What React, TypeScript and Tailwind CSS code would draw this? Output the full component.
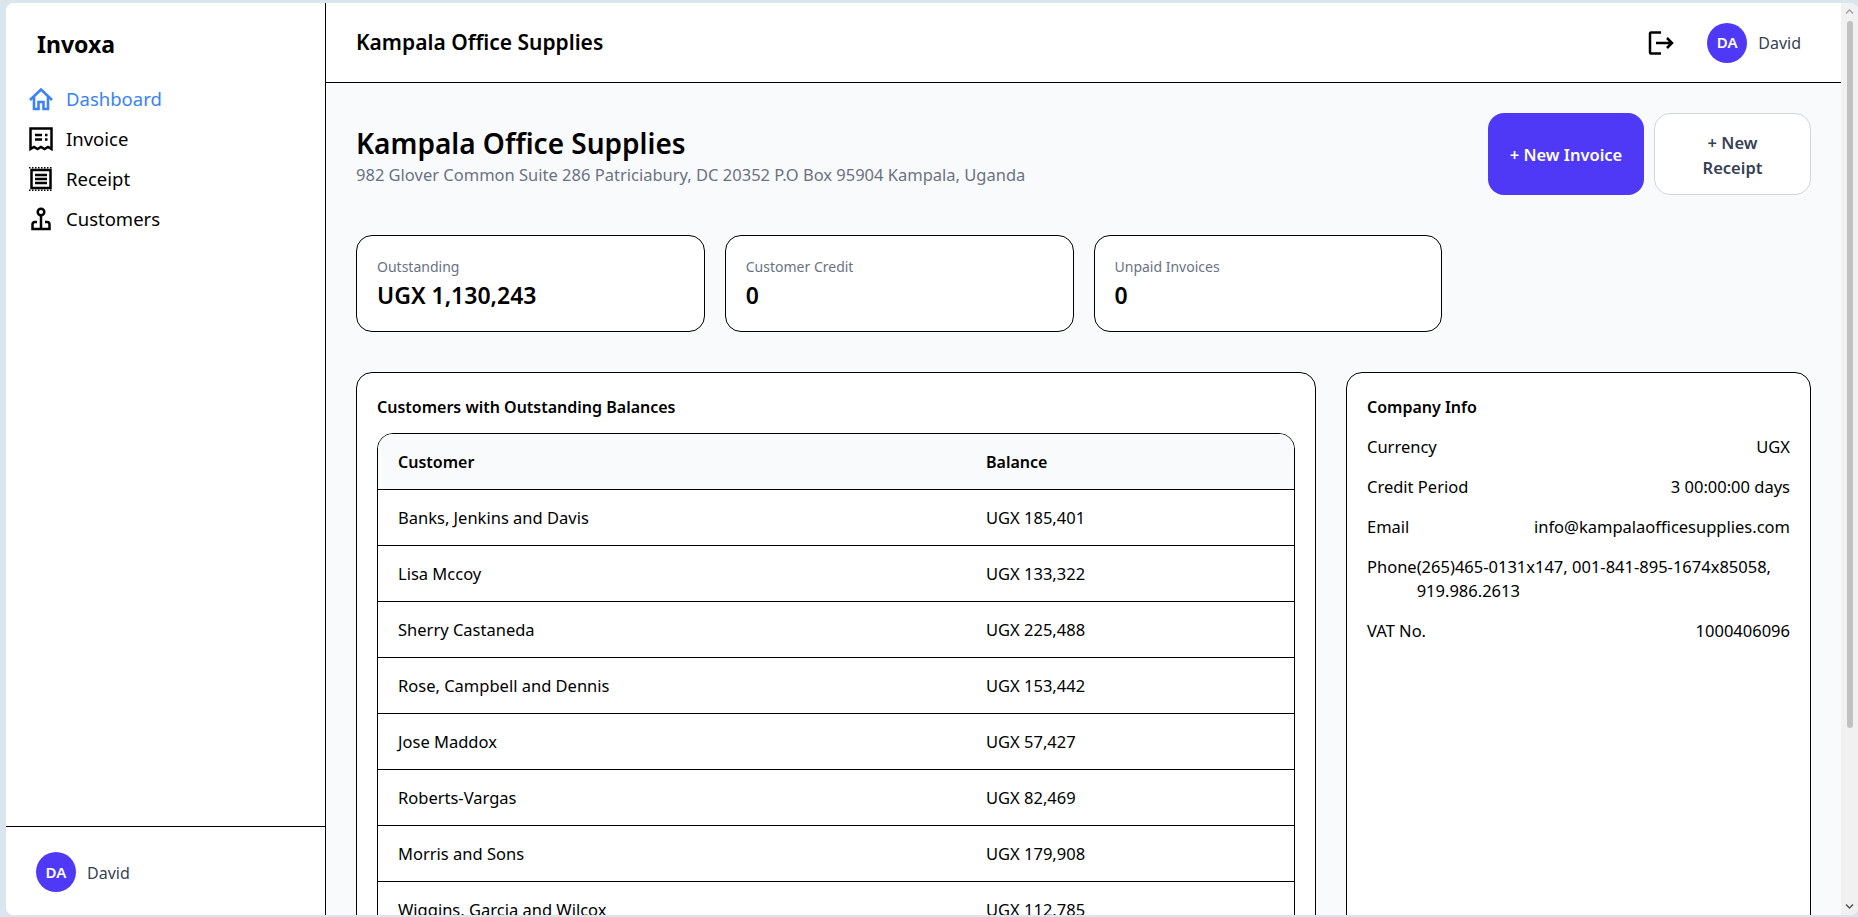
import React from "react";

const customers = [
  { name: "Banks, Jenkins and Davis", balance: "UGX 185,401" },
  { name: "Lisa Mccoy", balance: "UGX 133,322" },
  { name: "Sherry Castaneda", balance: "UGX 225,488" },
  { name: "Rose, Campbell and Dennis", balance: "UGX 153,442" },
  { name: "Jose Maddox", balance: "UGX 57,427" },
  { name: "Roberts-Vargas", balance: "UGX 82,469" },
  { name: "Morris and Sons", balance: "UGX 179,908" },
  { name: "Wiggins, Garcia and Wilcox", balance: "UGX 112,785" },
];

const HomeIcon = () => (
  <svg width="24" height="24" viewBox="0 0 24 24" fill="none" stroke="currentColor" strokeWidth="2.600">
    <path d="M1 13 12 2.500 23 13" />
    <path d="M5 10v12h4.500v-7h5v7H19V10" />
  </svg>
);

const InvoiceIcon = () => (
  <svg width="24" height="24" viewBox="0 0 24 24" fill="none" stroke="currentColor" strokeWidth="2.500">
    <path d="M1.500 22V1.500h21V22l-3.500-2-3.500 2-3.500-2-3.500 2-3.500-2z" />
    <path d="M6 8h7M6 12.500h7M16 8h2.500M16 12.500h2.500" />
  </svg>
);

const ReceiptIcon = () => (
  <svg width="24" height="24" viewBox="0 0 24 24" fill="none" stroke="currentColor" strokeWidth="2.500">
    <path d="M2.500 3h19v18h-19z" />
    <path d="M6 8h12M6 12h12M6 16h12" />
    <path d="M0 .8h24M0 23.200h24" strokeWidth="1.500" strokeDasharray="1.500 1.500" />
  </svg>
);

const CustomersIcon = () => (
  <svg width="24" height="24" viewBox="0 0 24 24" fill="none" stroke="currentColor" strokeWidth="2.500">
    <circle cx="12" cy="5" r="3.300" />
    <path d="M12 9v13" />
    <path d="M8 15H6a2.500 2.500 0 0 0-2.500 2.500V22h17v-4.500A2.500 2.500 0 0 0 18 15h-2" />
  </svg>
);

const LogoutIcon = () => (
  <svg width="26" height="24" viewBox="0 0 26 24" fill="none" stroke="currentColor" strokeWidth="2.500">
    <path d="M13 1.500H3a1 1 0 0 0-1 1v19a1 1 0 0 0 1 1h10" />
    <path d="M8 12h16M19 7l5 5-5 5" />
  </svg>
);

const Avatar = () => (
  <div className="flex h-10 w-10 items-center justify-center rounded-full bg-[#4f39f6] text-[15px] font-semibold text-white">DA</div>
);

const UserChip = () => (
  <div className="flex items-center gap-[11px]">
    <Avatar />
    <span className="mt-px text-base text-[#364153]">David</span>
  </div>
);

const NavItem: React.FC<{ icon: React.ReactNode; label: string; active?: boolean }> = ({ icon, label, active }) => (
  <div className={active ? "flex h-10 items-center gap-[13px] text-[#3b82f6]" : "flex h-10 items-center gap-[13px] text-black"}>
    {icon}
    <span className="text-[18.500px]">{label}</span>
  </div>
);

const StatCard: React.FC<{ label: string; value: string }> = ({ label, value }) => (
  <div className="h-[97px] rounded-2xl border border-black bg-white px-5 py-[21px]">
    <div className="text-sm leading-5 text-[#6a7282]">{label}</div>
    <div className="mt-[2px] text-[23px] leading-8 font-semibold text-black">{value}</div>
  </div>
);

const InfoRow: React.FC<{ label: string; value: string }> = ({ label, value }) => (
  <div className="flex justify-between text-[16.500px] leading-6">
    <span>{label}</span>
    <span>{value}</span>
  </div>
);

export default function App() {
  return (
    <div className="h-[917px] w-[1858px] overflow-hidden bg-[#dbe5ee] pt-[3px] pl-[6px] font-['Noto_Sans','Open_Sans',sans-serif] text-black">
      <div className="flex h-[912px] overflow-hidden rounded-lg bg-white">
        <aside className="flex w-[320px] shrink-0 flex-col border-r border-black bg-white">
          <div className="flex-1 pt-[25px]">
            <div className="pl-[31px] text-[23px] leading-8 font-bold">Invoxa</div>
            <nav className="mt-[19px] flex flex-col pl-[23px]">
              <NavItem icon={<HomeIcon />} label="Dashboard" active />
              <NavItem icon={<InvoiceIcon />} label="Invoice" />
              <NavItem icon={<ReceiptIcon />} label="Receipt" />
              <NavItem icon={<CustomersIcon />} label="Customers" />
            </nav>
          </div>
          <div className="flex h-[89px] items-start border-t border-black pt-[25px] pl-[30px]">
            <UserChip />
          </div>
        </aside>

        <div className="flex min-w-0 flex-1 flex-col">
          <header className="flex h-[80px] shrink-0 items-center justify-between border-b border-black bg-white pr-[40px] pl-[30px]">
            <div className="text-[21px] font-semibold">Kampala Office Supplies</div>
            <div className="flex items-center gap-[33px]">
              <LogoutIcon />
              <UserChip />
            </div>
          </header>

          <main className="min-h-0 flex-1 overflow-hidden bg-[#f9fafb] px-[30px] pt-[30px]">
            <div className="flex items-start justify-between">
              <div className="pt-[12px]">
                <h1 className="text-[28px] leading-9 font-semibold">Kampala Office Supplies</h1>
                <p className="mt-[2px] text-[16.500px] leading-6 text-[#6a7282]">982 Glover Common Suite 286 Patriciabury, DC 20352 P.O Box 95904 Kampala, Uganda</p>
              </div>
              <div className="flex gap-[10px]">
                <button className="h-[82px] w-[156px] rounded-2xl bg-[#4f39f6] pt-[3px] text-[16.500px] font-semibold text-white">+ New Invoice</button>
                <button className="h-[82px] w-[157px] rounded-2xl border border-[#d1d5dc] bg-white px-6 pt-px text-[16.500px] leading-[25px] font-semibold text-[#364153]">+ New Receipt</button>
              </div>
            </div>

            <div className="mt-[40px] grid grid-cols-4 gap-5">
              <StatCard label="Outstanding" value="UGX 1,130,243" />
              <StatCard label="Customer Credit" value="0" />
              <StatCard label="Unpaid Invoices" value="0" />
            </div>

            <div className="mt-[40px] grid grid-cols-[960px_465px] gap-[30px]">
              <section className="h-[600px] rounded-2xl border border-black bg-white px-5 pt-[22px]">
                <h2 className="text-base leading-6 font-semibold">Customers with Outstanding Balances</h2>
                <div className="mt-[14px] overflow-hidden rounded-2xl border border-black">
                  <div className="grid h-[56px] grid-cols-[588px_1fr] items-center border-b border-black bg-[#f9fafb] px-5 pt-px text-base font-semibold">
                    <div>Customer</div>
                    <div>Balance</div>
                  </div>
                  {customers.map((c) => (
                    <div key={c.name} className="grid h-[56px] grid-cols-[588px_1fr] items-center border-b border-black px-5 pt-[2px] text-[16.500px]">
                      <div>{c.name}</div>
                      <div>{c.balance}</div>
                    </div>
                  ))}
                </div>
              </section>

              <section className="h-[600px] rounded-2xl border border-black bg-white px-5 pt-[22px]">
                <h2 className="text-base leading-6 font-semibold">Company Info</h2>
                <div className="mt-4 flex flex-col gap-4">
                  <InfoRow label="Currency" value="UGX" />
                  <InfoRow label="Credit Period" value="3 00:00:00 days" />
                  <InfoRow label="Email" value="info@kampalaofficesupplies.com" />
                  <div className="flex text-[16.500px] leading-6">
                    <span>Phone</span>
                    <span>(265)465-0131x147, 001-841-895-1674x85058, 919.986.2613</span>
                  </div>
                  <InfoRow label="VAT No." value="1000406096" />
                </div>
              </section>
            </div>
          </main>
        </div>

        <div className="flex w-[17px] shrink-0 flex-col items-center bg-[#f1f1f1]">
          <svg width="17" height="17" viewBox="0 0 17 17" fill="#a3a3a3"><path d="M4.500 10 8.500 6l4 4-1 1-3-3-3 3z" /></svg>
          <div className="mt-[1px] h-[707px] w-[6px] rounded-full bg-[#c1c1c1]" />
          <div className="flex-1" />
          <svg width="17" height="17" viewBox="0 0 17 17" fill="#505050"><path d="M4.500 7 8.500 11l4-4-1-1-3 3-3-3z" /></svg>
        </div>
      </div>
    </div>
  );
}
